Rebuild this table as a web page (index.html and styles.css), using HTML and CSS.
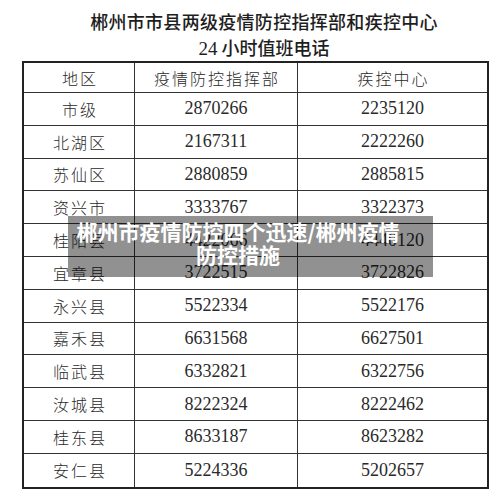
FILE: index.html
```html
<!DOCTYPE html>
<html lang="zh">
<head>
<meta charset="utf-8">
<title>郴州市市县两级疫情防控指挥部和疾控中心24小时值班电话</title>
<link rel="stylesheet" href="styles.css">
</head>
<body>
<div class="page">
  <div class="title">
    <div class="t1">郴州市市县两级疫情防控指挥部和疾控中心</div>
    <div class="t2"><span class="num">24</span> 小时值班电话</div>
  </div>
  <div class="tbl">
    <div class="c h">地区</div><div class="c h">疫情防控指挥部</div><div class="c h">疾控中心</div>
    <div class="c n">市级</div><div class="c d">2870266</div><div class="c d">2235120</div>
    <div class="c n">北湖区</div><div class="c d">2167311</div><div class="c d">2222260</div>
    <div class="c n">苏仙区</div><div class="c d">2880859</div><div class="c d">2885815</div>
    <div class="c n">资兴市</div><div class="c d">3333767</div><div class="c d">3322373</div>
    <div class="c n">桂阳县</div><div class="c d">4422066</div><div class="c d">4440120</div>
    <div class="c n">宜章县</div><div class="c d">3722515</div><div class="c d">3722826</div>
    <div class="c n">永兴县</div><div class="c d">5522334</div><div class="c d">5522176</div>
    <div class="c n">嘉禾县</div><div class="c d">6631568</div><div class="c d">6627501</div>
    <div class="c n">临武县</div><div class="c d">6332821</div><div class="c d">6322756</div>
    <div class="c n">汝城县</div><div class="c d">8222324</div><div class="c d">8222462</div>
    <div class="c n">桂东县</div><div class="c d">8633187</div><div class="c d">8623282</div>
    <div class="c n last">安仁县</div><div class="c d last">5224336</div><div class="c d last">5202657</div>
  </div>
  <div class="overlay">郴州市疫情防控四个迅速/郴州疫情<br>防控措施</div>
</div>
</body>
</html>
```

FILE: styles.css
```css
html, body {
  margin: 0;
  padding: 0;
  background: #ffffff;
}
.page {
  position: relative;
  width: 500px;
  height: 493px;
  overflow: hidden;
  background: #ffffff;
}
.title {
  padding: 8px 0 0 28px;
  text-align: center;
  color: #1e1e1e;
  font-family: "Noto Sans CJK SC", "Noto Sans", sans-serif;
}
.t1 {
  font-size: 18px;
  font-weight: 500;
  letter-spacing: 0.3px;
  line-height: 27px;
}
.t2 {
  font-size: 18px;
  font-weight: 500;
  line-height: 25px;
}
.t2 .num {
  font-family: "Liberation Serif", serif;
  font-weight: 400;
  font-size: 19px;
}
.tbl {
  margin-left: 22px;
  width: 467px;
  box-sizing: border-box;
  border: 2px solid #222;
  display: grid;
  grid-template-columns: 111px 163px 189px;
  grid-template-rows: 30px repeat(12, 32.8px);
  color: #2a2a2a;
}
.c {
  display: flex;
  align-items: center;
  justify-content: center;
  border-right: 1px solid #333;
  border-bottom: 1px solid #333;
  box-sizing: border-box;
}
.c:nth-child(3n) {
  border-right: none;
}
.c.last {
  border-bottom: none;
}
.h, .n {
  font-family: "Noto Sans CJK SC", sans-serif;
  font-weight: 300;
  font-size: 16px;
  letter-spacing: 2px;
  padding-left: 2px;
}
.d {
  font-family: "Liberation Serif", serif;
  font-size: 18px;
}
.overlay {
  position: absolute;
  left: 68px;
  top: 216px;
  width: 365px;
  height: 61px;
  box-sizing: border-box;
  padding: 4px 25px 0 0;
  background: rgba(0, 0, 0, 0.43);
  color: #ffffff;
  font-family: "Noto Sans CJK SC", sans-serif;
  font-weight: 700;
  font-size: 21px;
  line-height: 23px;
  text-align: center;
  white-space: nowrap;
}
```
